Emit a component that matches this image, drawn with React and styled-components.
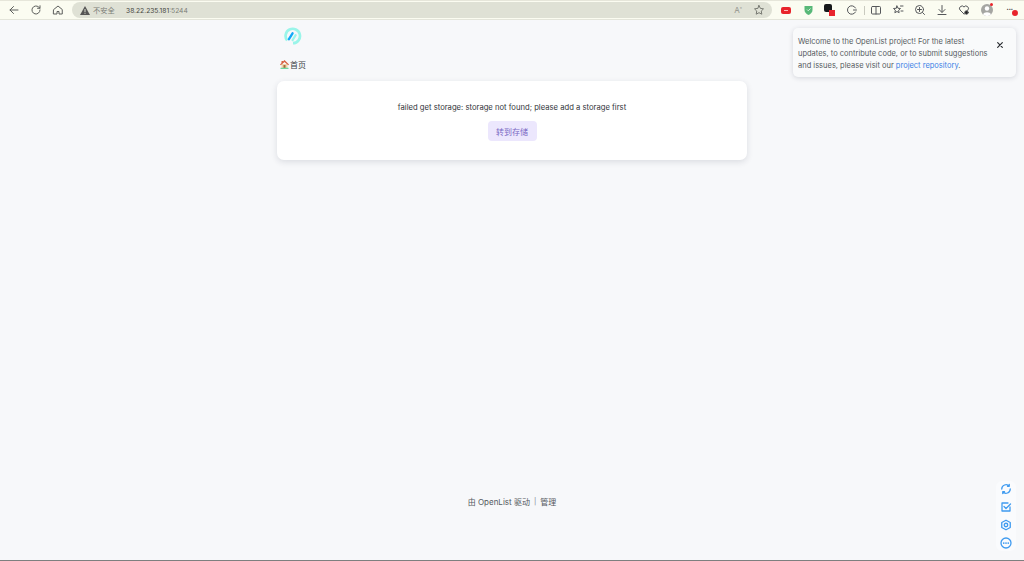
import React from "react";
import styled, { createGlobalStyle } from "styled-components";

const GlobalStyle = createGlobalStyle`
  html, body { margin: 0; padding: 0; height: 100%; }
  body {
    font-family: Inter, "Noto Sans CJK SC", "Noto Sans", sans-serif;
    background: #f7f8fa;
    overflow: hidden;
  }
  #root { height: 100%; }
`;

const Page = styled.div`
  display: flex;
  flex-direction: column;
  height: 561px;
  position: relative;
  border-bottom: 1px solid #7d7f7f;
  box-sizing: border-box;
`;

const Toolbar = styled.header`
  display: flex;
  align-items: center;
  height: 20px;
  flex: none;
  box-sizing: border-box;
  background: #fbfcf1;
  border-top: 1px solid #e6e6da;
  border-bottom: 1px solid #e4e5da;
  padding-left: 8px;
`;

const NavButton = styled.span`
  display: flex;
  align-items: center;
  justify-content: center;
  width: 12px;
  height: 12px;
  margin-right: ${p => p.$gap}px;
  color: #5c5e5c;
`;

const AddressBar = styled.div`
  display: flex;
  align-items: center;
  width: 700px;
  height: 16px;
  flex: none;
  padding: 0 7px 0 8px;
  box-sizing: border-box;
  border-radius: 8px;
  background: #dfe1d5;
  font-size: 6.7px;
  color: #55574f;
`;

const Insecure = styled.span`
  display: flex;
  align-items: center;
  gap: 3px;
  width: 46px;
  font-size: 7.2px;
  color: #7c7e77;
`;

const Host = styled.span`
  padding-top: 1px;
  color: #45463f;
  b { font-weight: 400; color: #7c7e77; }
`;

const BarEnd = styled.div`
  display: flex;
  align-items: center;
  gap: 11px;
  margin-left: auto;
  color: #777972;
`;

const ReadAloud = styled.span`
  font-size: 8px;
  color: #92948c;
  sup { font-size: 4px; }
`;

const Extensions = styled.div`
  display: flex;
  align-items: center;
  margin-left: 8px;
  flex: 1;
  color: #55575a;
`;

const ExtSlot = styled.span`
  position: relative;
  display: flex;
  align-items: center;
  justify-content: center;
  width: 12px;
  height: 12px;
  margin-right: ${p => p.$gap}px;
`;

const MoreDots = styled.span`
  font-size: 8px;
  font-weight: 700;
  line-height: 8px;
  margin: -3px 0 0 -5px;
  letter-spacing: -0.5px;
  color: #33353a;
`;

const Divider = styled.i`
  width: 1px;
  height: 9px;
  background: #c9cabf;
  margin-right: 5px;
`;

const Dot = styled.i`
  position: absolute;
  right: ${p => p.$right}px;
  top: ${p => p.$top}px;
  width: ${p => p.$size}px;
  height: ${p => p.$size}px;
  border-radius: 50%;
  background: #e8242c;
`;

const Content = styled.main`
  flex: 1;
  display: flex;
  flex-direction: column;
  align-items: center;
  min-height: 0;
`;

const Column = styled.div`
  width: 470px;
  display: flex;
  flex-direction: column;
`;

const LogoRow = styled.div`
  height: 20px;
  margin-top: 7px;
  padding-left: 7px;
`;

const Crumbs = styled.nav`
  display: flex;
  align-items: center;
  gap: 1px;
  height: 12px;
  margin-top: 11px;
  padding-left: 3px;
  font-size: 8px;
  color: #3a3e44;
`;

const Card = styled.section`
  display: flex;
  flex-direction: column;
  align-items: center;
  height: 79px;
  margin-top: 11px;
  padding-top: 21px;
  box-sizing: border-box;
  background: #fff;
  border-radius: 7px;
  box-shadow: 0 2px 6px rgba(30, 40, 60, 0.13);
`;

const Message = styled.p`
  margin: 0;
  font-size: 7.67px;
  line-height: 12px;
  color: #33363b;
`;

const Primary = styled.button`
  height: 20px;
  width: 49px;
  margin-top: 7px;
  padding: 0;
  border: none;
  border-radius: 4px;
  background: #ece7fd;
  color: #7a68c4;
  font: inherit;
  font-size: 8px;
`;

const Footer = styled.footer`
  display: flex;
  align-items: center;
  gap: 4px;
  margin-top: auto;
  margin-bottom: 53px;
  height: 12px;
  font-size: 8px;
  color: #54585e;
`;

const Separator = styled.span`
  color: #7c8087;
  font-size: 7px;
`;

const Notice = styled.aside`
  position: absolute;
  left: 793px;
  top: 28px;
  width: 223px;
  height: 49px;
  box-sizing: border-box;
  padding: 8px 24px 0 5px;
  border-radius: 5px;
  background: #f9fafb;
  box-shadow: 0 1px 5px rgba(30, 40, 60, 0.16);
  font-size: 7.5px;
  line-height: 12px;
  color: #565a61;
  a { color: #3b82e6; text-decoration: none; }
`;

const Close = styled.span`
  position: absolute;
  right: 12px;
  top: 13px;
  width: 8px;
  height: 8px;
  display: flex;
  color: #2a2d31;
`;

const SideTools = styled.div`
  position: absolute;
  right: 8px;
  bottom: 9px;
  display: flex;
  flex-direction: column;
  align-items: center;
  gap: 6px;
  width: 20px;
  padding: 2px 0;
  border-radius: 6px;
  background: #fafbfd;
  color: #3f9bf0;
`;

const ToolIcon = styled.span`
  display: flex;
  width: 12px;
  height: 12px;
`;

const Stroke = ({ size = 12, sw = 1, children }) => (
  <svg width={size} height={size} viewBox="0 0 24 24" fill="none" stroke="currentColor" strokeWidth={sw * 2} strokeLinecap="round" strokeLinejoin="round">
    {children}
  </svg>
);

const Logo = () => (
  <svg width="18" height="18" viewBox="0 0 20 20" fill="none">
    <path d="M3.500 15A8 8 0 1 1 10 18" stroke="#9af5e9" strokeWidth="3" />
    <path d="M5.500 13.500 9.500 7" stroke="#12a8f8" strokeWidth="2.600" strokeLinecap="round" />
    <path d="M9.500 14.500 13 9" stroke="#9af5e9" strokeWidth="2.400" strokeLinecap="round" />
  </svg>
);

const House = () => (
  <svg width="9" height="9" viewBox="0 0 18 18">
    <path d="M3 8h12v9H3z" fill="#f0d2a8" />
    <path d="M9 0 0 9l1.500 1.500L9 4l7.500 6.500L18 9z" fill="#d9603f" />
    <path d="M3 2h3v4H3z" fill="#d9603f" />
    <path d="M7 10h4v7H7z" fill="#a5693c" />
    <path d="M1 15.500h16V18H1z" fill="#6fd8a0" />
  </svg>
);

export default function App() {
  return (
    <Page>
      <GlobalStyle />
      <Toolbar>
        <NavButton $gap={10}>
          <Stroke><path d="M20 12H4M11 5l-7 7 7 7" /></Stroke>
        </NavButton>
        <NavButton $gap={10}>
          <Stroke><path d="M20 12a8 8 0 1 1-2.600-5.900L20 8.500M20 3.500v5h-5" /></Stroke>
        </NavButton>
        <NavButton $gap={8}>
          <Stroke><path d="M3.500 11 12 4l8.500 7v9H14v-5h-4v5H3.500z" /></Stroke>
        </NavButton>
        <AddressBar>
          <Insecure>
            <svg width="10" height="9" viewBox="0 0 20 18"><path d="M10 0 20 18H0z" fill="#555" /><path d="M9 6h2v6H9zM9 13.500h2v2H9z" fill="#dfe1d5" /></svg>
            不安全
          </Insecure>
          <Host>38.22.235.181<b>:5244</b></Host>
          <BarEnd>
            <ReadAloud>A<sup>»</sup></ReadAloud>
            <Stroke><path d="m12 3 2.800 5.800 6.200.9-4.500 4.400 1.100 6.300L12 17.400l-5.600 3 1.100-6.300L3 9.700l6.200-.9z" /></Stroke>
          </BarEnd>
        </AddressBar>
        <Extensions>
          <ExtSlot $gap={10}>
            <svg width="10" height="7" viewBox="0 0 10 7"><rect width="10" height="7" rx="2" fill="#e8242c" /><path d="M3 3.500h4" stroke="#fbb" /></svg>
          </ExtSlot>
          <ExtSlot $gap={10}>
            <svg width="9" height="10" viewBox="0 0 18 20"><path d="M1 2h16v8c0 5-4 8-8 10-4-2-8-5-8-10z" fill="#58b878" /><path d="m6 9 2.500 2.500L13 7" stroke="#d6f0de" strokeWidth="2" fill="none" /></svg>
          </ExtSlot>
          <ExtSlot $gap={10}>
            <svg width="12" height="12" viewBox="0 0 12 12"><rect x="0" y="0" width="8" height="8" rx="2" fill="#16181a" /><rect x="5" y="6" width="6" height="6" fill="#e8242c" /></svg>
          </ExtSlot>
          <ExtSlot $gap={6}>
            <Stroke><path d="M19 8A8.500 8.500 0 1 0 19 16M15 12h6" /></Stroke>
          </ExtSlot>
          <Divider />
          <ExtSlot $gap={10}>
            <Stroke><rect x="3" y="5" width="18" height="15" rx="2" /><path d="M12 5v15" /></Stroke>
          </ExtSlot>
          <ExtSlot $gap={10}>
            <Stroke><path d="m10 4 2 4.500 5 .5-3.700 3.400 1 5L10 15l-4.300 2.400 1-5L3 9l5-.5zM17 4h5M18 14h4" /></Stroke>
          </ExtSlot>
          <ExtSlot $gap={10}>
            <Stroke><circle cx="11" cy="11" r="8" /><path d="M11 7v8M7 11h8M17 17l4 4" /></Stroke>
          </ExtSlot>
          <ExtSlot $gap={10}>
            <Stroke><path d="M12 3v13M6 11l6 6 6-6M4 21h16" /></Stroke>
          </ExtSlot>
          <ExtSlot $gap={11}>
            <Stroke><path d="M12 20 4 12a5 5 0 0 1 8-6 5 5 0 0 1 8 6z" /><circle cx="17" cy="17" r="3.500" fill="#222" /></Stroke>
          </ExtSlot>
          <ExtSlot $gap={13}>
            <svg width="12" height="12" viewBox="0 0 12 12"><circle cx="6" cy="6" r="6" fill="#a5a6a2" /><circle cx="6" cy="4.500" r="2.200" fill="#fff" /><path d="M2 10.500c1-3 7-3 8 0a6 6 0 0 1-8 0z" fill="#fff" /></svg>
            <Dot $right={0} $top={-1} $size={3} />
          </ExtSlot>
          <ExtSlot $gap={0}>
            <MoreDots>···</MoreDots>
            <Dot $right={0} $top={6} $size={6} />
          </ExtSlot>
        </Extensions>
      </Toolbar>
      <Content>
        <Column>
          <LogoRow><Logo /></LogoRow>
          <Crumbs><House />首页</Crumbs>
          <Card>
            <Message>failed get storage: storage not found; please add a storage first</Message>
            <Primary>转到存储</Primary>
          </Card>
        </Column>
        <Footer>
          <span>由 OpenList 驱动</span>
          <Separator>|</Separator>
          <span>管理</span>
        </Footer>
      </Content>
      <Notice>
        Welcome to the OpenList project! For the latest updates, to contribute code, or to submit suggestions and issues, please visit our <a href="#repo">project repository</a>.
        <Close>
          <Stroke size={8} sw={1.800}><path d="M5 5l14 14M19 5 5 19" /></Stroke>
        </Close>
      </Notice>
      <SideTools>
        <ToolIcon>
          <Stroke sw={1.300}><path d="M20.500 12a8.500 8.500 0 0 1-15 5.500M3.500 12a8.500 8.500 0 0 1 15-5.500M18.500 3v3.500H15M5.500 21v-3.500H9" /></Stroke>
        </ToolIcon>
        <ToolIcon>
          <Stroke sw={1.300}><path d="M20 12v8H4V4h12M8 11l4 4 9-9" /></Stroke>
        </ToolIcon>
        <ToolIcon>
          <Stroke sw={1.300}><path d="M12 2.500 20.500 7v10L12 21.500 3.500 17V7z" /><circle cx="12" cy="12" r="3.500" /></Stroke>
        </ToolIcon>
        <ToolIcon>
          <Stroke sw={1.300}><circle cx="12" cy="12" r="10" /><path d="M7.500 12h.01M12 12h.01M16.500 12h.01" strokeWidth="3.500" /></Stroke>
        </ToolIcon>
      </SideTools>
    </Page>
  );
}
